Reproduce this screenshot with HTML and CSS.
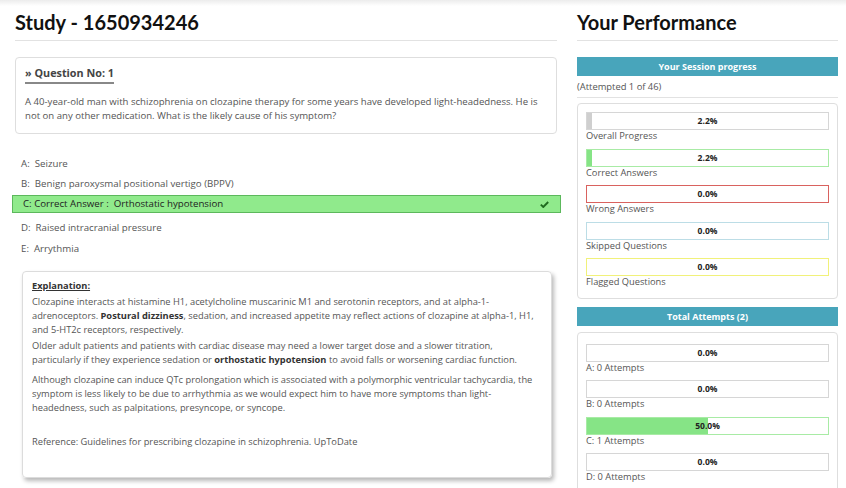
FILE: index.html
```html
<!DOCTYPE html>
<html>
<head>
<meta charset="utf-8">
<link rel="stylesheet" href="styles.css">
</head>
<body>
<div class="topshade"></div>
<div class="page">
  <main class="main">
    <h1 class="title">Study - 1650934246</h1>
    <section class="qbox">
      <div class="qhead">» Question No: 1</div>
      <p class="qtext">A 40-year-old man with schizophrenia on clozapine therapy for some years have developed light-headedness. He is not on any other medication. What is the likely cause of his symptom?</p>
    </section>
    <ul class="options">
      <li class="opt">A:&nbsp; Seizure</li>
      <li class="opt">B:&nbsp; Benign paroxysmal positional vertigo (BPPV)</li>
      <li class="opt correct"><span>C: Correct Answer :&nbsp; Orthostatic hypotension</span>
        <svg class="check" width="9" height="7" viewBox="0 0 9 7"><path d="M0.8 3.6 L3.3 6 L8.2 1" fill="none" stroke="#1f6b1f" stroke-width="1.9"/></svg>
      </li>
      <li class="opt">D:&nbsp; Raised intracranial pressure</li>
      <li class="opt">E:&nbsp; Arrythmia</li>
    </ul>
    <section class="explain">
      <div class="exhead">Explanation:</div>
      <p>Clozapine interacts at histamine H1, acetylcholine muscarinic M1 and serotonin receptors, and at alpha-1-adrenoceptors. <b>Postural dizziness</b>, sedation, and increased appetite may reflect actions of clozapine at alpha-1, H1, and 5-HT2c receptors, respectively.</p>
      <p>Older adult patients and patients with cardiac disease may need a lower target dose and a slower titration, particularly if they experience sedation or <b>orthostatic hypotension</b> to avoid falls or worsening cardiac function.</p>
      <p class="p3">Although clozapine can induce QTc prolongation which is associated with a polymorphic ventricular tachycardia, the symptom is less likely to be due to arrhythmia as we would expect him to have more symptoms than light-headedness, such as palpitations, presyncope, or syncope.</p>
      <p class="ref">Reference: Guidelines for prescribing clozapine in schizophrenia. UpToDate</p>
    </section>
  </main>
  <aside class="side">
    <h2 class="title">Your Performance</h2>
    <div class="band">Your Session progress</div>
    <div class="attempted">(Attempted 1 of 46)</div>
    <div class="card">
      <div class="stat"><div class="bar gray"><div class="fill" style="width:2.2%"></div><span>2.2%</span></div><div class="lbl">Overall Progress</div></div>
      <div class="stat"><div class="bar green"><div class="fill" style="width:2.2%"></div><span>2.2%</span></div><div class="lbl">Correct Answers</div></div>
      <div class="stat"><div class="bar red"><span>0.0%</span></div><div class="lbl">Wrong Answers</div></div>
      <div class="stat"><div class="bar blue"><span>0.0%</span></div><div class="lbl">Skipped Questions</div></div>
      <div class="stat"><div class="bar yellow"><span>0.0%</span></div><div class="lbl">Flagged Questions</div></div>
    </div>
    <div class="band band2">Total Attempts (2)</div>
    <div class="card card2">
      <div class="stat"><div class="bar"><span>0.0%</span></div><div class="lbl">A: 0 Attempts</div></div>
      <div class="stat"><div class="bar"><span>0.0%</span></div><div class="lbl">B: 0 Attempts</div></div>
      <div class="stat"><div class="bar green"><div class="fill" style="width:50%"></div><span>50.0%</span></div><div class="lbl">C: 1 Attempts</div></div>
      <div class="stat"><div class="bar"><span>0.0%</span></div><div class="lbl">D: 0 Attempts</div></div>
    </div>
  </aside>
</div>
</body>
</html>
```
FILE: styles.css
```css
* { box-sizing: border-box; }
html, body { margin: 0; padding: 0; background: #fff; }
body {
  font-family: "Open Sans", "Liberation Sans", sans-serif;
  color: #555;
  font-size: 9.3px;
  overflow: hidden;
  height: 488px;
}
.topshade {
  height: 6px;
  background: linear-gradient(#ececec, #fff);
}
.page {
  display: flex;
  gap: 20px;
  padding: 0 8px 0 15px;
  margin-top: -6px;
}
.main { width: 542px; flex: none; }
.side { width: 261px; flex: none; }
.title {
  font-family: "Lato", "Open Sans", sans-serif;
  font-weight: 700;
  font-size: 20px;
  color: #111;
  margin: 0;
  padding: 11px 0 7px;
  line-height: 22px;
  border-bottom: 1px solid #e2e2e2;
}
.qbox {
  margin-top: 16px;
  border: 1px solid #dedede;
  border-radius: 4px;
  padding: 8px 9px 6px;
  height: 77px;
}
.qhead {
  display: inline-block;
  font-weight: 700;
  font-size: 10.8px;
  color: #444;
  line-height: 14px;
  padding-bottom: 2px;
  border-bottom: 2px solid #888;
}
.qtext {
  margin: 11px 0 0;
  line-height: 14px;
  font-size: 9.6px;
}
.options {
  list-style: none;
  margin: 18px 0 0;
  padding: 0;
  font-size: 9.7px;
}
.opt {
  height: 21px;
  line-height: 21px;
  padding-left: 6px;
}
.opt:first-child { line-height: 23px; }
.opt.correct {
  height: 18px;
  line-height: 16px;
  margin: 1px -4px 4px -3px;
  padding-left: 10px;
  padding-right: 11px;
  background: #90ea8c;
  border: 1px solid #5cb85c;
  color: #222;
  display: flex;
  justify-content: space-between;
  align-items: center;
}
.check { display: block; }
.explain {
  margin: 12px 5px 0 7px;
  border: 1px solid #dcdcdc;
  border-radius: 4px;
  box-shadow: 2px 3px 4px rgba(0,0,0,0.28);
  padding: 7px 9px 0;
  height: 207px;
}
.exhead {
  font-weight: 700;
  color: #333;
  text-decoration: underline;
  line-height: 14px;
  margin-bottom: 2px;
}
.explain p {
  margin: 0 0 2px;
  line-height: 14px;
}
.explain p.p3 { margin-top: 6px; }
.explain b { color: #333; }
.explain p.ref { margin-top: 20px; }
.band {
  margin-top: 16px;
  height: 19px;
  line-height: 19px;
  background: #48a5bb;
  color: #fff;
  font-weight: 700;
  text-align: center;
  font-size: 9px;
}
.attempted {
  line-height: 21px;
  border-bottom: 1px solid #e2e2e2;
  font-size: 9.4px;
}
.card {
  margin-top: 5px;
  border: 1px solid #dedede;
  border-radius: 4px;
  padding: 8px 8px 3px;
}
.stat { margin-bottom: 6.5px; }
.bar {
  position: relative;
  height: 18px;
  border: 1px solid #d6d6d6;
  text-align: center;
  line-height: 16px;
  font-weight: 700;
  font-size: 8.5px;
  color: #222;
}
.bar span { position: relative; }
.fill {
  position: absolute;
  left: 0; top: 0; bottom: 0;
}
.bar.gray .fill { background: #cfcfcf; }
.bar.green { border-color: #a8eba5; }
.bar.green .fill { background: #86e486; }
.bar.red { border-color: #d9625f; }
.bar.blue { border-color: #bcdde6; }
.bar.yellow { border-color: #f1f17a; }
.lbl { line-height: 12px; }
.band2 { margin-top: 8px; }
.card2 { margin-top: 6px; padding-top: 11px; }
```
